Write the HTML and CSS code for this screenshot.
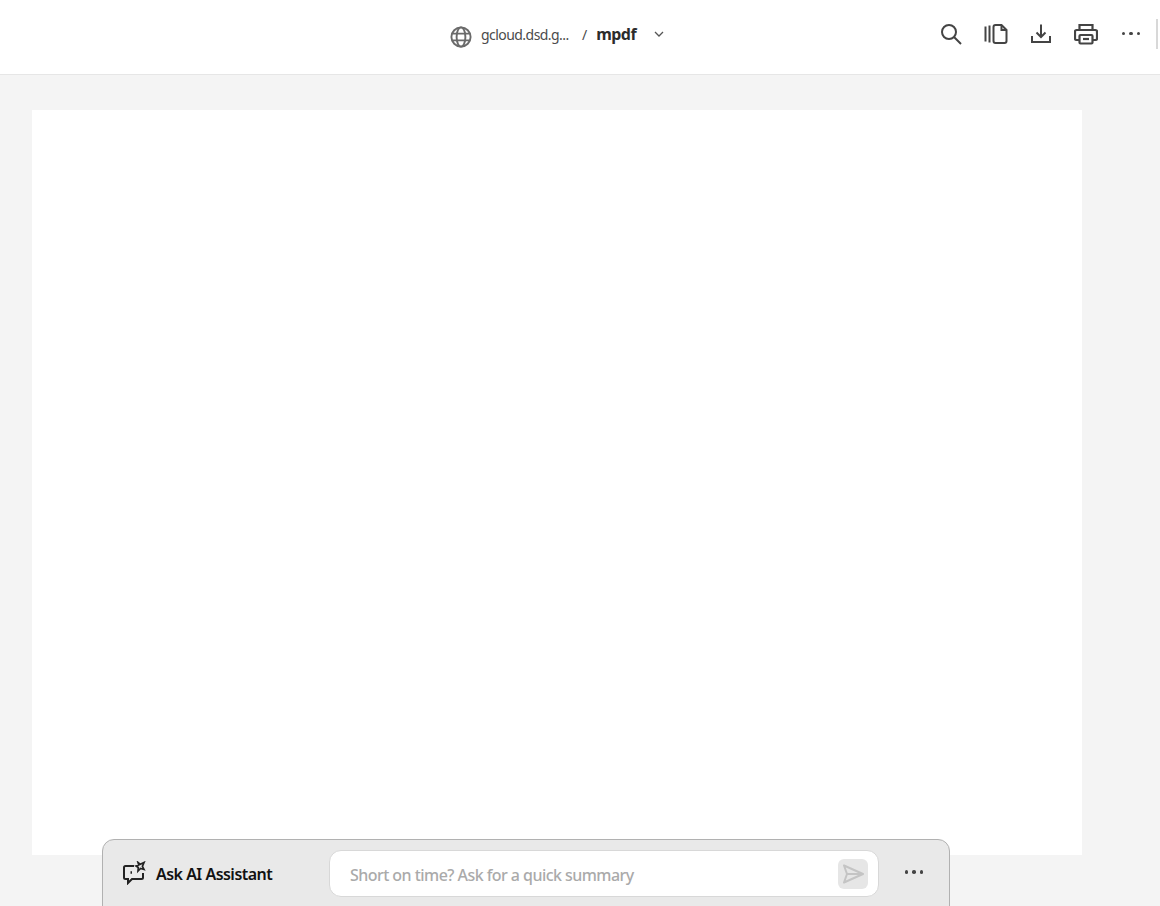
FILE: index.html
```html
<!DOCTYPE html>
<html lang="en">
<head>
<meta charset="utf-8">
<title>mpdf</title>
<link rel="stylesheet" href="styles.css">
</head>
<body>
<div class="app">
  <header class="topbar">
    <div class="crumbs">
      <svg class="globe" width="22" height="22" viewBox="0 0 22 22" fill="none" stroke="#6a6a6a" stroke-width="1.9"><circle cx="11" cy="11" r="9.6"/><ellipse cx="11" cy="11" rx="4.4" ry="9.6"/><path d="M2 7.6h18M2 14.4h18"/></svg>
      <span class="host">gcloud.dsd.g...</span>
      <span class="slash">/</span>
      <span class="name">mpdf</span>
      <svg class="chev" width="10" height="6" viewBox="0 0 10 6" fill="none" stroke="#555" stroke-width="1.3"><path d="M1 1l4 4 4-4"/></svg>
    </div>
    <div class="tools">
      <button class="tool"><svg width="22" height="22" viewBox="0 0 22 22" fill="none" stroke="#444" stroke-width="2"><circle cx="9" cy="9" r="7"/><path d="M14 14l7 7"/></svg></button>
      <button class="tool"><svg width="24" height="22" viewBox="0 0 24 22" fill="none" stroke="#444" stroke-width="2"><path d="M1.500 3.500v15M5.500 2.500v17"/><path d="M9.500 4a2 2 0 0 1 2-2h6l5 5v11a2 2 0 0 1-2 2h-9a2 2 0 0 1-2-2z"/><path d="M17.500 2v5h5"/></svg></button>
      <button class="tool"><svg width="22" height="22" viewBox="0 0 22 22" fill="none" stroke="#444" stroke-width="2"><path d="M11 1.500v12M6.500 9.500l4.500 4.500 4.500-4.500"/><path d="M2 13v6h18v-6"/></svg></button>
      <button class="tool"><svg width="24" height="22" viewBox="0 0 24 22" fill="none" stroke="#444" stroke-width="2.200"><path d="M5.500 7V2h13v5"/><path d="M5.500 17H2.500A1.500 1.500 0 0 1 1 15.500v-7A1.500 1.500 0 0 1 2.500 7h19A1.500 1.500 0 0 1 23 8.500v7a1.500 1.500 0 0 1-1.500 1.500h-3"/><rect x="5.500" y="12" width="13" height="8.500" rx="1"/><path d="M9 16h6"/></svg></button>
      <button class="tool tool-last"><span class="dots"><i></i><i></i><i></i></span></button>
      <span class="divider"></span>
    </div>
  </header>
  <main class="viewer">
    <div class="sheet"></div>
    <section class="dock">
      <div class="dock-title">
        <svg width="24" height="24" viewBox="0 0 24 24" fill="none" stroke="#222" stroke-width="2"><path d="M12 5H3.500A1.500 1.500 0 0 0 2 6.500v10A1.500 1.500 0 0 0 3.500 18H6v4l4-4h9.500a1.500 1.500 0 0 0 1.500-1.500V12"/><path d="M8.500 11.500h1.500" stroke-width="2.600"/><path d="M16 1.500l2.300 1.800 3.700-1.800-1.600 3.800 1.600 3.200-3.400-1-2.600 2.500.3-3.500-2.300-1.500 2.800-1z" stroke-width="1.700" stroke-linejoin="miter"/></svg>
        <span>Ask AI Assistant</span>
      </div>
      <div class="prompt">
        <span class="placeholder">Short on time? Ask for a quick summary</span>
        <span class="send"><svg width="22" height="20" viewBox="0 0 22 20" fill="none" stroke="#c4c4c4" stroke-width="2" stroke-linejoin="round"><path d="M2 1.500L21 10 2 18.500 5 10z"/><path d="M5 10h16"/></svg></span>
      </div>
      <button class="more"><span class="dots"><i></i><i></i><i></i></span></button>
    </section>
  </main>
</div>
</body>
</html>
```

FILE: styles.css
```css
* { box-sizing: border-box; }
html, body { margin: 0; height: 100%; overflow: hidden; }
body { font-family: "Noto Sans", "Open Sans", sans-serif; color: #222; background: #f4f4f4; }
.app { display: flex; flex-direction: column; height: 906px; }
.topbar { position: relative; height: 75px; flex: none; background: #fff; border-bottom: 1px solid #e6e6e6; display: flex; align-items: center; justify-content: flex-end; padding-bottom: 7px; }
.crumbs { position: absolute; left: 450px; top: 26px; display: flex; align-items: center; height: 22px; }
.host { margin-left: 9px; font-size: 14px; letter-spacing: -0.55px; color: #4b4b4b; margin-top: -6px; width: 92px; white-space: nowrap; }
.slash { margin-left: 9px; font-size: 14px; color: #4b4b4b; margin-top: -6px; }
.name { margin-left: 9px; font-size: 16px; font-weight: 700; letter-spacing: -0.55px; color: #2c2c2c; margin-top: -6px; }
.chev { margin-left: 18px; margin-top: -7px; }
.tools { display: flex; align-items: center; height: 30px; margin-right: 1px; }
.tool { width: 45px; height: 30px; padding: 0; border: 0; background: none; display: flex; align-items: center; justify-content: center; }
.tool-last { width: 46px; }
.dots { display: flex; gap: 4px; }
.dots i { width: 3.500px; height: 3.500px; border-radius: 50%; background: #444; }
.divider { width: 2px; height: 30px; margin-left: 2px; margin-right: 1px; background: #d8d8d8; }
.viewer { position: relative; flex: 1; min-height: 0; padding: 35px 78px 0 32px; overflow: hidden; }
.sheet { height: 745px; background: #fff; }
.dock { position: absolute; left: 102px; top: 764px; width: 848px; height: 90px; background: #e9e9e9; border: 1px solid #b1b1b1; border-radius: 12px; display: flex; align-items: flex-start; padding: 10px 0 0 19px; }
.dock-title { display: flex; align-items: center; width: 207px; height: 46px; gap: 10px; font-size: 16px; font-weight: 600; letter-spacing: -0.52px; color: #111; }
.dock-title span { margin-top: 2px; }
.prompt { width: 550px; height: 47px; background: #fff; border: 1px solid #d8d8d8; border-radius: 12px; display: flex; align-items: center; justify-content: space-between; padding: 0 10px 0 20px; }
.placeholder { font-size: 16px; font-weight: 500; letter-spacing: -0.55px; color: #aaa; margin-top: 2px; }
.send { width: 30px; height: 30px; background: #e6e6e6; border-radius: 6px; display: flex; align-items: center; justify-content: center; }
.more { width: 70px; height: 44px; padding: 0; border: 0; background: none; display: flex; align-items: center; justify-content: center; }
```
